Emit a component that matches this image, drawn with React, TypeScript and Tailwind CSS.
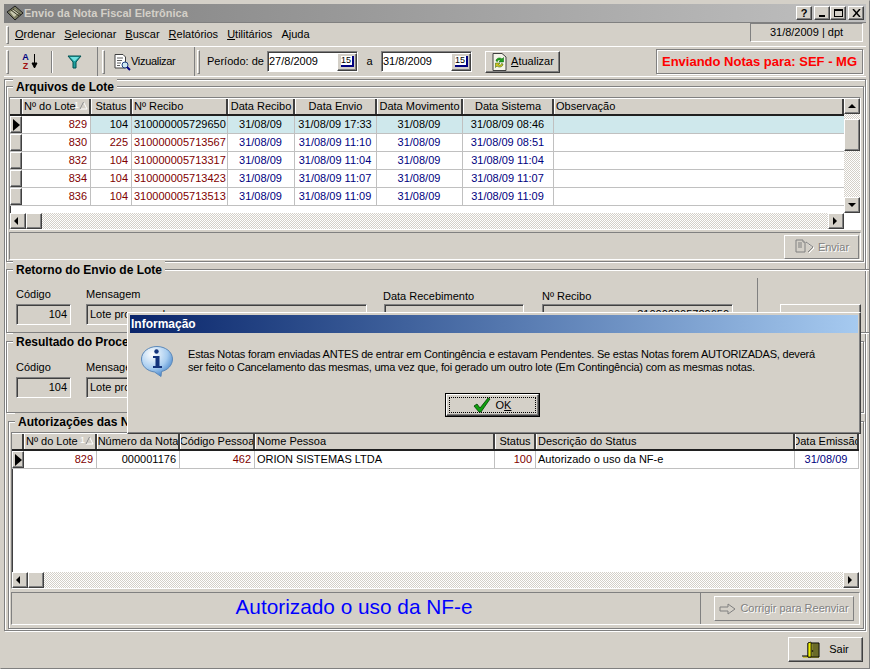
import React from "react";

const raised = "border border-t-white border-l-white border-r-[#404040] border-b-[#404040] shadow-[inset_-1px_-1px_0_#808080]";
const sunken = "border border-t-[#808080] border-l-[#808080] border-r-white border-b-white shadow-[inset_1px_1px_0_#404040]";
const etchedLine = "border-t border-t-[#808080] border-b border-b-white";
const dither = "bg-[repeating-conic-gradient(#ffffff_0_25%,#d4d0c8_0_50%)] bg-[length:2px_2px]";
const disabled = "text-[#808080] [text-shadow:1px_1px_0_#fff]";

const Grip = () => <div className="w-[3px] h-[24px] border border-t-white border-l-white border-r-[#808080] border-b-[#808080] shrink-0" />;

const Tri = ({ d }: { d: "l" | "r" | "u" | "d" }) => {
  const p = { l: "5,1 1,5 5,9", r: "2,1 6,5 2,9", u: "1,7 5,3 9,7", d: "1,3 5,7 9,3" }[d];
  return <svg width="10" height="10" viewBox="0 0 10 10"><polygon points={p} fill="#000" /></svg>;
};

const ScrollBtn = ({ d, w = "w-[16px]", h = "h-[16px]" }: { d?: "l" | "r" | "u" | "d"; w?: string; h?: string }) => (
  <div className={`${w} ${h} ${raised} bg-[#d4d0c8] flex items-center justify-center shrink-0`}>{d && <Tri d={d} />}</div>
);

const SortMark = () => (
  <span className="absolute right-[1px] top-[2px] flex items-center text-white text-[9px] leading-none">
    1<svg width="9" height="9" viewBox="0 0 9 9"><polygon points="4.5,1 8,8 1,8" fill="none" stroke="#fff" /><path d="M4.5 1 L1 8" stroke="#808080" fill="none" /></svg>
  </span>
);

type Col = { t: string; w: number; a?: string; sort?: boolean };

const HeadCell = ({ c }: { c: Col }) => (
  <div style={{ width: c.w }} className={`relative shrink-0 h-full px-[1px] flex items-center overflow-hidden whitespace-nowrap bg-[#d4d0c8] border-l border-l-white border-r-2 border-r-[#404040] ${c.a === "c" ? "justify-center" : "justify-start"}`}>
    {c.a === "c" ? <span className="shrink-0">{c.t}</span> : c.t}{c.sort && <SortMark />}
  </div>
);

type Cell = { t: string; cls?: string };

const RowCell = ({ w, c, bg }: { w: number; c: Cell; bg?: string }) => (
  <div style={{ width: w }} className={`shrink-0 h-full pl-[2px] pr-[3px] flex items-center whitespace-nowrap overflow-hidden border-r border-r-[#c0c0c0] ${bg ?? ""} ${c.cls ?? ""}`}>{c.t}</div>
);

const cols1: Col[] = [
  { t: "Nº do Lote", w: 69, sort: true },
  { t: "Status", w: 41, a: "c" },
  { t: "Nº Recibo", w: 96 },
  { t: "Data Recibo", w: 67, a: "c" },
  { t: "Data Envio", w: 82, a: "c" },
  { t: "Data Movimento", w: 86, a: "c" },
  { t: "Data Sistema", w: 91, a: "c" },
  { t: "Observação", w: 290 },
];

const rows1 = [
  ["829", "104", "310000005729650", "31/08/09", "31/08/09 17:33", "31/08/09", "31/08/09 08:46"],
  ["830", "225", "310000005713567", "31/08/09", "31/08/09 11:10", "31/08/09", "31/08/09 08:51"],
  ["832", "104", "310000005713317", "31/08/09", "31/08/09 11:04", "31/08/09", "31/08/09 11:04"],
  ["834", "104", "310000005713423", "31/08/09", "31/08/09 11:07", "31/08/09", "31/08/09 11:07"],
  ["836", "104", "310000005713513", "31/08/09", "31/08/09 11:09", "31/08/09", "31/08/09 11:09"],
];

const Pointer = () => <svg width="9" height="12" viewBox="0 0 9 12"><polygon points="1,0 8,6 1,12" fill="#000" /></svg>;

const Indicator = ({ active }: { active?: boolean }) => (
  <div className={`w-[12px] h-full shrink-0 bg-[#d4d0c8] ${raised} flex items-center justify-center`}>{active && <Pointer />}</div>
);

const Grid1 = () => (
  <div className={`h-[133px] ${sunken} bg-white flex flex-col relative`}>
    <div className="flex flex-1 min-h-0">
      <div className="flex-1 min-w-0 flex flex-col overflow-hidden">
        <div className="flex h-[18px] shrink-0 border-b-2 border-b-[#202020] border-t border-t-white">
          <div className="w-[12px] shrink-0 bg-[#d4d0c8] border-r-2 border-r-[#404040]" />
          {cols1.map((c) => <HeadCell key={c.t} c={c} />)}
        </div>
        {rows1.map((r, i) => {
          const first = i === 0;
          return (
            <div key={r[0]} className="flex h-[18px] shrink-0 border-b border-b-[#c0c0c0]">
              <Indicator active={first} />
              <RowCell w={69} c={{ t: r[0], cls: "justify-end text-[#800000]" }} />
              <RowCell w={41} bg={first ? "bg-[#cfe8ec]" : ""} c={{ t: r[1], cls: `justify-end ${first ? "text-black" : "text-[#800000]"}` }} />
              <RowCell w={96} bg={first ? "bg-[#cfe8ec]" : ""} c={{ t: r[2], cls: first ? "text-black" : "text-[#800000]" }} />
              <RowCell w={67} bg={first ? "bg-[#cfe8ec]" : ""} c={{ t: r[3], cls: `justify-center ${first ? "text-black" : "text-[#000080]"}` }} />
              <RowCell w={82} bg={first ? "bg-[#cfe8ec]" : ""} c={{ t: r[4], cls: `justify-center ${first ? "text-black" : "text-[#000080]"}` }} />
              <RowCell w={86} bg={first ? "bg-[#cfe8ec]" : ""} c={{ t: r[5], cls: `justify-center ${first ? "text-black" : "text-[#000080]"}` }} />
              <RowCell w={91} bg={first ? "bg-[#cfe8ec]" : ""} c={{ t: r[6], cls: `justify-center ${first ? "text-black" : "text-[#000080]"}` }} />
              <div className={`flex-1 h-full ${first ? "bg-[#cfe8ec]" : ""}`} />
            </div>
          );
        })}
      </div>
      <div className={`w-[16px] shrink-0 flex flex-col ${dither}`}>
        <ScrollBtn d="u" />
        <ScrollBtn h="h-[32px] mt-[5px]" />
        <div className="flex-1" />
        <ScrollBtn d="d" />
      </div>
    </div>
    <div className="flex h-[16px] shrink-0 pr-[16px] bg-white">
      <div className={`flex-1 flex ${dither}`}>
        <ScrollBtn d="l" />
        <ScrollBtn />
        <div className="flex-1" />
        <ScrollBtn d="r" />
      </div>
    </div>
  </div>
);

const cols2: Col[] = [
  { t: "Nº do Lote", w: 73, sort: true },
  { t: "Número da Nota", w: 83, a: "c" },
  { t: "Código Pessoa", w: 75, a: "c" },
  { t: "Nome Pessoa", w: 240 },
  { t: "Status", w: 41, a: "c" },
  { t: "Descrição do Status", w: 259 },
  { t: "Data Emissão", w: 64, a: "c" },
];

const Grid2 = () => (
  <div className={`h-[157px] ${sunken} bg-white flex flex-col`}>
    <div className="flex h-[18px] shrink-0 border-b-2 border-b-[#202020] border-t border-t-white">
      <div className="w-[12px] shrink-0 bg-[#d4d0c8] border-r-2 border-r-[#404040]" />
      {cols2.map((c) => <HeadCell key={c.t} c={c} />)}
    </div>
    <div className="flex h-[18px] shrink-0 border-b border-b-[#c0c0c0]">
      <Indicator active />
      <RowCell w={73} c={{ t: "829", cls: "justify-end text-[#800000]" }} />
      <RowCell w={83} c={{ t: "000001176", cls: "justify-end" }} />
      <RowCell w={75} c={{ t: "462", cls: "justify-end text-[#800000]" }} />
      <RowCell w={240} c={{ t: "ORION SISTEMAS LTDA" }} />
      <RowCell w={41} c={{ t: "100", cls: "justify-end text-[#800000]" }} />
      <RowCell w={259} c={{ t: "Autorizado o uso da NF-e" }} />
      <RowCell w={64} c={{ t: "31/08/09", cls: "justify-center text-[#000080]" }} />
    </div>
    <div className="flex-1" />
    <div className={`flex h-[16px] shrink-0 ${dither}`}>
      <ScrollBtn d="l" />
      <ScrollBtn />
      <div className="flex-1" />
      <ScrollBtn d="r" />
    </div>
  </div>
);

const Group = ({ title, className, inner, children }: { title: string; className: string; inner: string; children: React.ReactNode }) => (
  <fieldset className={`shrink-0 border border-[#808080] shadow-[inset_1px_1px_0_#fff,1px_1px_0_#fff] ${className}`}>
    <legend className="ml-[6px] px-[3px] pt-[2px] font-bold text-[12px] leading-[15px] bg-[#d4d0c8]">{title}</legend>
    <div className={inner}>{children}</div>
  </fieldset>
);

const Field = ({ label, value, w, right }: { label: string; value: string; w: string; right?: boolean }) => (
  <div className={`${w} shrink-0 flex flex-col`}>
    <div className="h-[17px] leading-[14px]">{label}</div>
    <div className={`h-[21px] ${sunken} px-[3px] flex items-center whitespace-nowrap overflow-hidden ${right ? "justify-end" : ""}`}>{value}</div>
  </div>
);

const IconCalendar = () => (
  <div className={`w-[20px] h-[18px] ${raised} bg-[#d4d0c8] flex items-center justify-center shrink-0`}>
    <span className="w-[13px] h-[11px] bg-white border-r-2 border-b-2 border-[#000080] text-[9px] leading-[9px] text-center text-black">15</span>
  </div>
);

const DateInput = ({ v }: { v: string }) => (
  <div className={`w-[91px] h-[21px] ${sunken} bg-white pl-[1px] flex items-center justify-between shrink-0`}>
    <span>{v}</span><IconCalendar />
  </div>
);

const IconDoc = () => (
  <svg width="18" height="18" viewBox="0 0 18 18">
    <path d="M2 1.500H10L12.500 4V15H2Z" fill="#fff" stroke="#404040" />
    <path d="M4 5H10M4 7.500H9M4 10H8M4 12.500H7" stroke="#606060" />
    <circle cx="12" cy="12" r="3" fill="#cfe8f0" stroke="#204080" />
    <path d="M14 14L17 17" stroke="#000080" strokeWidth="2" />
  </svg>
);

const IconRefresh = () => (
  <svg width="17" height="20" viewBox="0 0 17 20">
    <path d="M2 1.500H11L15 5V18.500H2Z" fill="#f4f4e8" stroke="#404040" />
    <path d="M5 9C5 6 9 5 11 7L12.500 5.500V10H8L9.500 8.500C8 7.500 6.500 8 6.500 9.500Z" fill="#20a020" stroke="#006000" strokeWidth=".5" />
    <path d="M12 12C12 15 8 16 6 14L4.500 15.500V11H9L7.500 12.500C9 13.500 10.500 13 10.500 11.500Z" fill="#d0c020" stroke="#206000" strokeWidth=".5" />
  </svg>
);

const IconFilter = () => (
  <svg width="15" height="14" viewBox="0 0 15 14">
    <path d="M1 1H14L9 7V13H6V7Z" fill="#20a0a0" stroke="#005050" />
    <path d="M3 2H12L8 6H7Z" fill="#70e0e0" />
  </svg>
);

const IconSend = () => (
  <svg width="22" height="16" viewBox="0 0 22 16">
    <path d="M2 1H9V3H11V13H2Z" fill="none" stroke="#808080" />
    <path d="M4 4H8M4 6H8M4 8H8" stroke="#808080" />
    <path d="M13 4L20 9L15 14" fill="none" stroke="#ffffff" strokeWidth="1" />
    <path d="M12 3L19 8L14 13" fill="none" stroke="#808080" strokeWidth="1" />
  </svg>
);

const IconArrow = () => (
  <svg width="17" height="12" viewBox="0 0 17 12">
    <path d="M1 4H9V1L16 6L9 11V8H1Z" fill="none" stroke="#808080" />
  </svg>
);

const IconDoor = () => (
  <svg width="18" height="18" viewBox="0 0 18 18">
    <rect x="1" y="15" width="16" height="2" fill="#c8c040" />
    <path d="M0 15H6" stroke="#000" />
    <path d="M6 2H17V16H6Z" fill="#808030" stroke="#000" />
    <path d="M6 2L9 1V16L6 16Z" fill="#f0f000" stroke="#000" strokeWidth=".7" />
    <rect x="11" y="3" width="5" height="12" fill="#6a6a28" />
    <circle cx="10.500" cy="10" r=".8" fill="#000" />
  </svg>
);

const IconInfo = () => (
  <svg width="32" height="31" viewBox="0 0 32 31">
    <defs>
      <radialGradient id="ib" cx="35%" cy="25%" r="80%">
        <stop offset="0%" stopColor="#ffffff" />
        <stop offset="60%" stopColor="#a8cdf0" />
        <stop offset="100%" stopColor="#3f80c8" />
      </radialGradient>
    </defs>
    <path d="M16 .5C24.500 .5 31.500 6 31.500 13C31.500 19 27 24 20.500 25.500L20 30.500L13.500 26C6 25 .5 20 .5 13C.5 6 7.500 .5 16 .5Z" fill="url(#ib)" stroke="#5c88b8" />
    <circle cx="15.500" cy="5.500" r="2.200" fill="#14347c" />
    <path d="M12 10H18.500V20H21V22H12V20H14.500V12H12Z" fill="#14347c" />
  </svg>
);

const IconCheck = () => (
  <svg width="18" height="16" viewBox="0 0 18 16">
    <path d="M1 9L4 7L7 11L15 1L17 2L8 15H6Z" fill="#10a010" stroke="#004000" strokeWidth=".8" />
  </svg>
);

const IconLogo = () => (
  <svg width="18" height="16" viewBox="0 0 18 16">
    <path d="M1 7L9 1L17 8L9 15Z" fill="#7a7a60" stroke="#202020" />
    <path d="M4 7L9 4L13 8L8 12Z" fill="#c8c8b0" />
    <path d="M5 5L13 11M7 4L15 10" stroke="#303020" />
  </svg>
);

const WinBtn = ({ children, className = "" }: { children: React.ReactNode; className?: string }) => (
  <div className={`w-[16px] h-[14px] ${raised} bg-[#d4d0c8] flex items-center justify-center text-black font-bold text-[11px] leading-none ${className}`}>{children}</div>
);

export default function App() {
  return (
    <div className="relative w-[870px] h-[669px] overflow-hidden bg-[#d4d0c8] text-black text-[11px] leading-[13px] font-['Liberation_Sans',Arial,sans-serif] flex flex-col px-[3px] pt-[3px] border border-t-[#d4d0c8] border-l-[#d4d0c8] border-r-[#808080] border-b-[#808080]">
      {/* title bar */}
      <div className="h-[18px] shrink-0 bg-gradient-to-r from-[#808080] to-[#c0c0c0] flex items-center text-[#d4d0c8] font-bold text-[11px] pl-[2px] pr-[2px]">
        <IconLogo />
        <span>Envio da Nota Fiscal Eletrônica</span>
        <div className="ml-auto flex items-center">
          <WinBtn>?</WinBtn>
          <WinBtn className="ml-[2px]"><span className="w-[6px] h-[2px] bg-black mt-[6px]" /></WinBtn>
          <WinBtn><span className="w-[9px] h-[8px] border border-black border-t-2" /></WinBtn>
          <WinBtn className="ml-[2px]">
            <svg width="9" height="8" viewBox="0 0 9 8"><path d="M1 0L8 8M8 0L1 8" stroke="#000" strokeWidth="1.500" /></svg>
          </WinBtn>
        </div>
      </div>
      {/* menu */}
      <div className={`h-[25px] shrink-0 ${etchedLine} flex items-start pl-[2px] pr-[3px]`}>
        <div className="h-[18px] w-[3px] mt-[3px] border border-t-white border-l-white border-r-[#808080] border-b-[#808080]" />
        <div className="flex items-center gap-[9px] ml-[6px] mt-[5px] text-[11px]">
          <span><u>O</u>rdenar</span>
          <span><u>S</u>elecionar</span>
          <span><u>B</u>uscar</span>
          <span><u>R</u>elatórios</span>
          <span><u>U</u>tilitários</span>
          <span>Ajuda</span>
        </div>
        <div className="ml-auto w-[113px] h-[19px] border border-t-[#808080] border-l-[#808080] border-r-white border-b-white flex items-center justify-center">31/8/2009 | dpt</div>
      </div>
      {/* toolbar */}
      <div className="h-[30px] shrink-0 border-b border-b-white flex items-center pl-[2px] pr-[3px]">
        <div className="flex items-center h-full border-r border-r-[#808080] shrink-0 w-[92px]">
          <Grip />
          <div className="w-[42px] flex justify-center">
            <span className="flex flex-col items-center text-[9px] leading-[9px] font-bold">
              <span className="text-[#000080]">A</span><span className="text-[#a01010]">Z</span>
            </span>
            <svg width="7" height="16" viewBox="0 0 7 16" className="ml-[2px]"><path d="M3.500 1V12M1 10L3.500 15L6 10Z" fill="#000" stroke="#000" /></svg>
          </div>
          <div className="w-[1px] h-[22px] bg-[#808080] shadow-[1px_0_0_#fff]" />
          <div className="flex-1 flex justify-center"><IconFilter /></div>
        </div>
        <div className="ml-[4px] flex items-center h-full w-[93px] shrink-0 border-r border-r-[#808080]">
          <Grip />
          <div className="ml-[8px] flex items-center"><IconDoc /><span className="tracking-[-0.3px]">Vizualizar</span></div>
        </div>
        <div className="ml-[2px] flex items-center h-full shrink-0">
          <Grip />
          <span className="ml-[7px] whitespace-nowrap w-[60px]">Período: de</span>
          <DateInput v="27/8/2009" />
          <span className="w-[23px] text-center">a</span>
          <DateInput v="31/8/2009" />
          <button className={`ml-[13px] w-[75px] h-[22px] ${raised} bg-[#d4d0c8] flex items-center justify-center gap-[3px]`}>
            <IconRefresh /><span><u>A</u>tualizar</span>
          </button>
        </div>
        <div className="ml-auto w-[207px] h-[25px] border border-[#808080] shadow-[inset_1px_1px_0_#fff,1px_1px_0_#fff] flex items-center justify-center text-[#ff0000] font-bold text-[13px] whitespace-nowrap">Enviando Notas para: SEF - MG</div>
      </div>
      {/* main */}
      <div className="mt-[2px] flex-1 min-h-0 border border-[#808080] shadow-[inset_1px_1px_0_#fff,1px_1px_0_#fff] p-[1px] flex flex-col">
        <Group title="Arquivos de Lote" className="h-[184px] -mt-[3px]" inner="px-[2px] pt-[2px]">
          <Grid1 />
          <div className="h-[28px] mt-[2px] border border-t-[#808080] border-l-[#808080] border-r-white border-b-white flex items-end justify-end pr-[1px]">
            <button className={`w-[75px] h-[24px] border border-t-white border-l-white border-r-[#808080] border-b-[#808080] flex items-center justify-center gap-[2px] ${disabled}`}>
              <IconSend />Enviar
            </button>
          </div>
        </Group>
        <Group title="Retorno do Envio de Lote" className="h-[72px] -mt-[1px]" inner="px-[9px]">
          <div className="flex gap-[15px] mt-[9px]">
            <Field label="Código" value="104" w="w-[55px]" right />
            <Field label="Mensagem" value="Lote processado" w="w-[281px]" />
            <div className="w-[140px] ml-[2px] shrink-0 flex flex-col">
              <div className="h-[17px] pt-[2px] leading-[14px] -ml-[1px]">Data Recebimento</div>
              <div className={`h-[21px] ${sunken}`} />
            </div>
            <div className="w-[191px] ml-[3px] shrink-0 flex flex-col">
              <div className="h-[17px] pt-[2px] leading-[14px]">Nº Recibo</div>
              <div className={`h-[21px] ${sunken} px-[3px] flex items-center justify-end`}>310000005729650</div>
            </div>
            <div className="w-px h-[50px] -mt-[9px] ml-[9px] bg-[#808080]" />
            <div className={`w-[81px] h-[21px] mt-[17px] ml-[7px] ${raised}`} />
          </div>
        </Group>
        <Group title="Resultado do Processamento" className="h-[80px]" inner="px-[9px]">
          <div className="flex gap-[15px] mt-[10px]">
            <Field label="Código" value="104" w="w-[55px]" right />
            <Field label="Mensagem" value="Lote processado" w="w-[281px]" />
          </div>
        </Group>
        <Group title="Autorizações das Notas" className="flex-1 min-h-0 ml-[2px] mr-[2px]" inner="pl-[2px] pr-[3px] pt-[2px]">
          <Grid2 />
          <div className="h-[33px] mt-[3px] border border-t-[#808080] border-l-[#808080] border-r-white border-b-white flex items-center">
            <div className="flex-1 text-center text-[#0000ff] text-[20.8px] leading-[24px] mb-[4px] pr-[4px]">Autorizado o uso da NF-e</div>
            <div className="w-px h-full bg-[#808080]" />
            <button className={`ml-[13px] mr-[5px] w-[140px] h-[25px] border border-t-white border-l-white border-r-[#808080] border-b-[#808080] flex items-center justify-center gap-[4px] whitespace-nowrap ${disabled}`}>
              <IconArrow />Corrigir para Reenviar
            </button>
          </div>
        </Group>
      </div>
      {/* footer */}
      <div className="h-[37px] shrink-0 flex items-center justify-end pr-[3px]">
        <button className={`w-[75px] h-[25px] ${raised} bg-[#d4d0c8] flex items-center justify-center gap-[9px]`}>
          <IconDoor />Sair
        </button>
      </div>

      {/* modal dialog */}
      <div className={`absolute left-[126px] top-[311px] w-[734px] h-[122px] bg-[#d4d0c8] p-[2px] ${raised}`}>
        <div className="h-[18px] bg-gradient-to-r from-[#0a246a] to-[#a6caf0] flex items-center pl-[1px] text-white font-bold text-[12px]">Informação</div>
        <div className="flex pl-[11px] pt-[13px]">
          <div className="w-[32px] shrink-0"><IconInfo /></div>
          <p className="ml-[15px] w-[650px] leading-[13px] pt-[2px] whitespace-nowrap tracking-[-0.2px]">
            Estas Notas foram enviadas ANTES de entrar em Contingência e estavam Pendentes. Se estas Notas forem AUTORIZADAS, deverá<br />
            ser feito o Cancelamento das mesmas, uma vez que, foi gerado um outro lote (Em Contingência) com as mesmas notas.
          </p>
        </div>
        <div className="flex justify-center mt-[16px] pr-[4px]">
          <button className="w-[95px] h-[24px] border border-black">
            <div className={`w-full h-full ${raised} flex items-center justify-center p-[2px]`}>
              <div className="w-full h-full border border-dotted border-black flex items-center justify-center gap-[5px]">
                <IconCheck /><span>O<u>K</u></span>
              </div>
            </div>
          </button>
        </div>
      </div>
    </div>
  );
}
